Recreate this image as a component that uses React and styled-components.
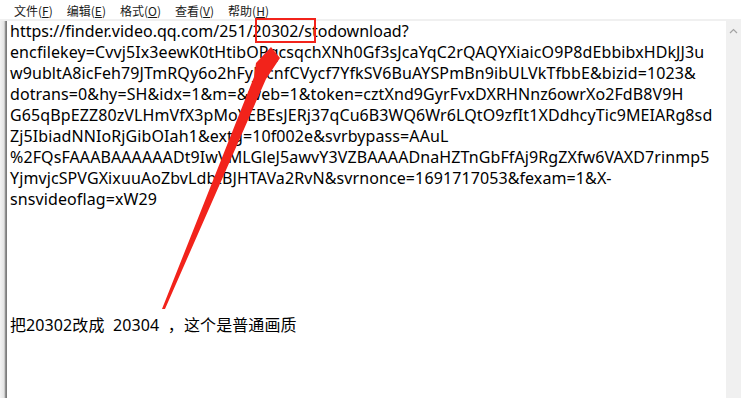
import React from "react";
import styled, { createGlobalStyle } from "styled-components";

const GlobalStyle = createGlobalStyle`
  html, body { margin: 0; padding: 0; background: #fff; overflow: hidden; }
  body { font-family: "Noto Sans", "Noto Sans CJK SC", sans-serif; }
`;

const Window = styled.div`
  position: relative;
  width: 741px;
  height: 398px;
  display: flex;
  flex-direction: column;
  background: #fff;
  overflow: hidden;
`;

const MenuBar = styled.div`
  height: 19px;
  display: flex;
  align-items: center;
  padding-left: 7px;
  background: #fff;
  font-family: "Noto Sans CJK SC", sans-serif;
  font-size: 12px;
  color: #1a1a1a;
`;

const MenuItem = styled.div`
  padding: 1px 7px 0;
  line-height: 19px;
  white-space: nowrap;
`;

const Key = styled.span`
  text-decoration: underline;
  text-underline-offset: 1px;
`;

const Divider = styled.div`
  height: 2px;
  background: #f0f0f0;
`;

const Body = styled.div`
  flex: 1;
  display: flex;
  min-height: 0;
`;

const LeftEdge = styled.div`
  width: 7px;
  background: linear-gradient(
    to right,
    #f3f3f3 0px,
    #e4e4e4 4px,
    #b4b4b4 5px,
    #6e6e6e 6px,
    #8a8a8a 7px
  );
`;

const Editor = styled.div`
  flex: 1;
  padding: 0 3px;
  font-family: "Noto Sans", "Noto Sans CJK SC", sans-serif;
  font-size: 16px;
  line-height: 21px;
  color: #000;
`;

const Line = styled.div`
  white-space: pre;
  height: 21px;
  letter-spacing: ${(p) => (p.$wide ? "0.1px" : "0")};
`;

const Scrollbar = styled.div`
  width: 15px;
  background: #f0f0f0;
  display: flex;
  justify-content: center;
  padding-top: 7px;
  box-sizing: border-box;
`;

const Overlay = styled.svg`
  position: absolute;
  left: 0;
  top: 0;
  pointer-events: none;
`;

const lines = [
  "https://finder.video.qq.com/251/20302/stodownload?",
  "encfilekey=Cvvj5Ix3eewK0tHtibOPqcsqchXNh0Gf3sJcaYqC2rQAQYXiaicO9P8dEbbibxHDkJJ3u",
  "w9ubltA8icFeh79JTmRQy6o2hFyJlicnfCVycf7YfkSV6BuAYSPmBn9ibULVkTfbbE&bizid=1023&",
  "dotrans=0&hy=SH&idx=1&m=&web=1&token=cztXnd9GyrFvxDXRHNnz6owrXo2FdB8V9H",
  "G65qBpEZZ80zVLHmVfX3pMoYEBEsJERj37qCu6B3WQ6Wr6LQtO9zfIt1XDdhcyTic9MEIARg8sd",
  "Zj5IbiadNNIoRjGibOIah1&extg=10f002e&svrbypass=AAuL",
  "%2FQsFAAABAAAAAADt9IwVMLGleJ5awvY3VZBAAAADnaHZTnGbFfAj9RgZXfw6VAXD7rinmp5",
  "YjmvjcSPVGXixuuAoZbvLdbIBJHTAVa2RvN&svrnonce=1691717053&fexam=1&X-",
  "snsvideoflag=xW29",
  "",
  "",
  "",
  "",
  "",
  "把20302改成  20304  ，这个是普通画质",
];

const menus = [
  ["文件", "F"],
  ["编辑", "E"],
  ["格式", "O"],
  ["查看", "V"],
  ["帮助", "H"],
];

export default function App() {
  return (
    <>
      <GlobalStyle />
      <Window>
        <MenuBar>
          {menus.map(([label, k]) => (
            <MenuItem key={k}>
              {label}(<Key>{k}</Key>)
            </MenuItem>
          ))}
        </MenuBar>
        <Divider />
        <Body>
          <LeftEdge />
          <Editor>
            {lines.map((l, i) => (
              <Line key={i} $wide={i > 0}>
                {l}
              </Line>
            ))}
          </Editor>
          <Scrollbar>
            <svg width="9" height="6" viewBox="0 0 9 6">
              <path d="M1 5 L4.5 1.5 L8 5" fill="none" stroke="#a3a3a3" strokeWidth="1.2" />
            </svg>
          </Scrollbar>
        </Body>
        <Overlay width="741" height="398" viewBox="0 0 741 398">
          <rect x="256" y="19" width="59" height="23" fill="none" stroke="#f2231b" strokeWidth="2" />
          <polygon
            points="271,47 280,58 266,79 165,309 162,309 254,77 256,63"
            fill="#f2231b"
          />
        </Overlay>
      </Window>
    </>
  );
}
